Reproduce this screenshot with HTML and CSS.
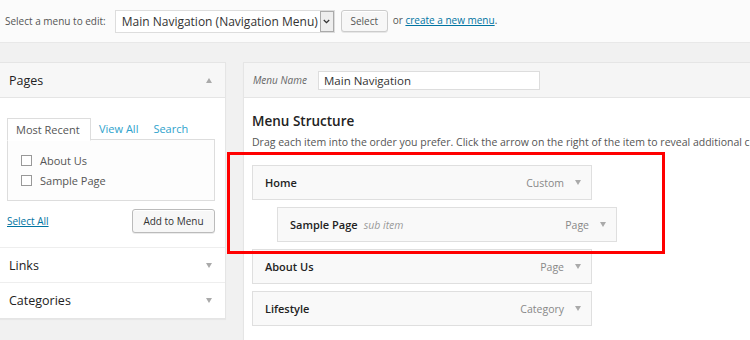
FILE: index.html
```html
<!DOCTYPE html>
<html>
<head>
    <title>Menus</title>
    <link rel="stylesheet" href="styles.css">
</head>
<body>
    <div class="topbar">
        <span class="topbar-label">Select a menu to edit:</span>
        <div class="menu-select">
            <span>Main Navigation (Navigation Menu)</span>
            <span class="menu-select-arrow">
                <svg width="7" height="5" viewBox="0 0 7 5"><path d="M0.8 1 L3.5 3.7 L6.2 1" fill="none" stroke="#333" stroke-width="1.3"/></svg>
            </span>
        </div>
        <button class="btn">Select</button>
        <span class="topbar-or">or <a href="#">create a new menu</a>.</span>
    </div>

    <div class="main">
        <div class="sidebar">
            <div class="box">
                <div class="box-head open">Pages <span class="tri tri-up"></span></div>
                <div class="box-body">
                    <div class="tabs">
                        <span class="tab active">Most Recent</span>
                        <a class="tab" href="#">View All</a>
                        <a class="tab" href="#">Search</a>
                    </div>
                    <div class="tab-panel">
                        <label class="check"><span class="checkbox"></span>About Us</label>
                        <label class="check"><span class="checkbox"></span>Sample Page</label>
                    </div>
                    <div class="box-actions">
                        <a href="#" class="select-all">Select All</a>
                        <button class="btn btn-add">Add to Menu</button>
                    </div>
                </div>
                <div class="box-head">Links <span class="tri tri-down"></span></div>
                <div class="box-head last">Categories <span class="tri tri-down"></span></div>
            </div>
        </div>

        <div class="editor">
            <div class="editor-head">
                <span class="menu-name-label">Menu Name</span>
                <div class="menu-name-input">Main Navigation</div>
            </div>
            <div class="editor-body">
                <h3>Menu Structure</h3>
                <p class="hint">Drag each item into the order you prefer. Click the arrow on the right of the item to reveal additional co</p>
                <ul class="menu-items">
                    <li class="item"><b>Home</b><span class="item-type">Custom</span><span class="tri tri-down"></span></li>
                    <li class="item sub"><b>Sample Page</b><i>sub item</i><span class="item-type">Page</span><span class="tri tri-down"></span></li>
                    <li class="item"><b>About Us</b><span class="item-type">Page</span><span class="tri tri-down"></span></li>
                    <li class="item"><b>Lifestyle</b><span class="item-type">Category</span><span class="tri tri-down"></span></li>
                </ul>
                <div class="highlight"></div>
            </div>
        </div>
    </div>
</body>
</html>
```

FILE: styles.css
```css
* {
    box-sizing: border-box;
}

html, body {
    margin: 0;
    height: 100%;
    overflow: hidden;
    background-color: #f1f1f1;
    color: #444;
    font-family: "Open Sans", "DejaVu Sans", sans-serif;
}

a {
    color: #0074a2;
}

/* Top bar */
.topbar {
    height: 43px;
    display: flex;
    align-items: center;
    padding-left: 5px;
    background-color: #fbfbfb;
    border-bottom: 1px solid #e8e8e8;
    font-size: 10px;
}

.topbar-label {
    color: #555;
    margin-right: 9px;
}

.menu-select {
    display: flex;
    align-items: center;
    justify-content: space-between;
    width: 220px;
    height: 23px;
    padding-left: 6px;
    background: #fff;
    border: 1px solid #ddd;
    font-size: 12px;
    color: #333;
}

.menu-select-arrow {
    width: 14px;
    height: 21px;
    display: flex;
    align-items: center;
    justify-content: center;
    background: #eee;
    border: 1px solid #aaa;
}

.btn {
    font-family: inherit;
    background: #f7f7f7;
    border: 1px solid #ccc;
    border-radius: 3px;
    color: #555;
    box-shadow: 0 1px 0 #fff inset, 0 1px 0 rgba(0,0,0,.08);
}

.topbar .btn {
    margin-left: 6px;
    width: 47px;
    height: 22px;
    font-size: 10px;
    padding: 0;
}

.topbar-or {
    margin-left: 5px;
    color: #555;
    margin-top: -2px;
}

/* Layout */
.main {
    display: flex;
    padding-top: 19px;
    gap: 17px;
}

.sidebar {
    width: 226px;
    flex-shrink: 0;
}

.box {
    background: #fff;
    border: 1px solid #e5e5e5;
    border-left: none;
    box-shadow: 0 1px 1px rgba(0,0,0,.04);
}

.box-head {
    height: 35px;
    display: flex;
    align-items: center;
    justify-content: space-between;
    padding: 0 13px 0 9px;
    font-size: 12.5px;
    color: #222;
    border-bottom: 1px solid #eee;
}

.box-head.open {
    background: #f7f7f7;
    border-bottom-color: #e5e5e5;
}

.box-head.last {
    border-bottom: none;
}

.tri {
    width: 0;
    height: 0;
    border-left: 3.5px solid transparent;
    border-right: 3.5px solid transparent;
}

.tri-up {
    border-bottom: 5px solid #aaa;
}

.tri-down {
    border-top: 5px solid #aaa;
}

.box-body {
    padding: 20px 10px 14px 7px;
    border-bottom: 1px solid #eee;
}

.tabs {
    display: flex;
    font-size: 11px;
    height: 22px;
}

.tab {
    padding: 0 7px 0 8px;
    line-height: 21px;
    color: #2ea2cc;
    text-decoration: none;
}

.tab.active {
    color: #555;
    background: #fff;
    border: 1px solid #ddd;
    border-bottom: 1px solid #fff;
    position: relative;
    z-index: 1;
    width: 84px;
    height: 23px;
}

.tab-panel {
    border: 1px solid #ddd;
    margin-top: -1px;
    height: 62px;
    padding: 10px 0 0 13px;
    background: #fdfdfd;
}

.check {
    display: flex;
    align-items: center;
    height: 20px;
    font-size: 11px;
    color: #555;
}

.checkbox {
    width: 11px;
    height: 11px;
    border: 1px solid #999;
    background: #fff;
    margin-right: 8px;
}

.box-actions {
    display: flex;
    align-items: center;
    justify-content: space-between;
    margin-top: 8px;
}

.select-all {
    font-size: 10px;
}

.btn-add {
    width: 83px;
    height: 24px;
    font-size: 10px;
    padding: 0;
    color: #333;
    border-color: #bbb;
}

/* Editor */
.editor {
    flex: 1;
    background: #fff;
    border: 1px solid #e5e5e5;
    border-right: none;
    box-shadow: 0 1px 1px rgba(0,0,0,.04);
}

.editor-head {
    height: 35px;
    display: flex;
    align-items: center;
    padding-left: 9px;
    background: #f5f5f5;
    border-bottom: 1px solid #e5e5e5;
}

.menu-name-label {
    font-size: 10px;
    font-style: italic;
    color: #666;
    width: 65px;
}

.menu-name-input {
    width: 222px;
    height: 19px;
    background: #fff;
    border: 1px solid #ddd;
    padding-left: 5px;
    font-size: 11.5px;
    color: #333;
    line-height: 17px;
}

.editor-body {
    position: relative;
    padding: 13px 0 40px 8px;
}

h3 {
    margin: 0;
    font-size: 13.5px;
    font-weight: 600;
    color: #222;
    line-height: 20px;
}

.hint {
    margin: 1px 0 0;
    font-size: 10.5px;
    color: #555;
    white-space: nowrap;
    line-height: 20px;
}

.menu-items {
    list-style: none;
    margin: 13px 0 0;
    padding: 0;
}

.item {
    width: 340px;
    height: 35px;
    display: flex;
    align-items: center;
    padding: 0 10px 0 12px;
    margin-bottom: 7px;
    background: #f9f9f9;
    border: 1px solid #dfdfdf;
    font-size: 11px;
}

.item.sub {
    margin-left: 25px;
}

.item b {
    font-weight: 600;
    color: #222;
}

.item i {
    margin-left: 6px;
    color: #999;
    font-size: 10.5px;
}

.item-type {
    margin-left: auto;
    margin-right: 11px;
    color: #888;
    font-size: 10.5px;
}

.highlight {
    position: absolute;
    left: -17px;
    top: 54px;
    width: 438px;
    height: 102px;
    border: 3px solid #f00;
}
```
